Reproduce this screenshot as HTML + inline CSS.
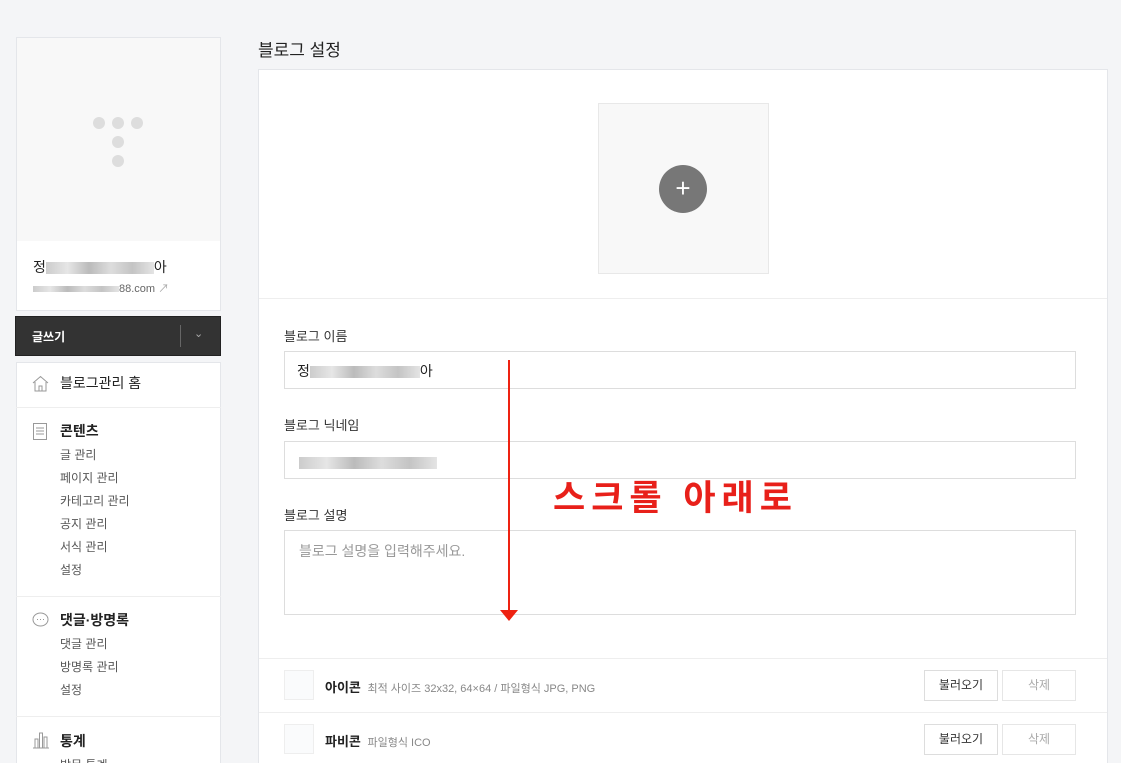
<!DOCTYPE html>
<html><head><meta charset="utf-8"><style>
*{box-sizing:border-box;margin:0;padding:0}
html,body{width:1121px;height:763px;overflow:hidden}
body{background:#f4f5f7;font-family:"Liberation Sans","Noto Sans CJK KR",sans-serif;color:#222;position:relative}
.a{position:absolute}
.box{position:absolute;background:#fff;border:1px solid #e4e6ea}
.blur{display:inline-block;height:12px;background:linear-gradient(90deg,#ccc,#e6e6e6 20%,#bbb 40%,#ddd 60%,#c4c4c4 80%,#e4e4e4);vertical-align:middle}
.lbl{position:absolute;left:284px;font-size:13px;color:#333}
.inp{position:absolute;left:284px;width:792px;border:1px solid #ddd;background:#fff}
.btn{position:absolute;width:74px;height:30px;border:1px solid #ddd;font-size:12px;text-align:center;line-height:28px;background:#fff}
.sub{font-size:12px;color:#555;line-height:23px;padding-left:44px}
.hd{font-size:14px;font-weight:bold;color:#222;padding-left:44px;position:relative;line-height:20px}
</style></head><body>
<div class="box" style="left:16px;top:37px;width:205px;height:205px;background:#f8f8f8"></div>
<div class="a" style="left:93px;top:117px;width:12px;height:12px;border-radius:6px;background:#ddd"></div>
<div class="a" style="left:112px;top:117px;width:12px;height:12px;border-radius:6px;background:#ddd"></div>
<div class="a" style="left:131px;top:117px;width:12px;height:12px;border-radius:6px;background:#ddd"></div>
<div class="a" style="left:112px;top:136px;width:12px;height:12px;border-radius:6px;background:#ddd"></div>
<div class="a" style="left:112px;top:155px;width:12px;height:12px;border-radius:6px;background:#ddd"></div>
<div class="box" style="left:16px;top:241px;width:205px;height:70px;border-top:none"></div>
<div class="a" style="left:33px;top:257px;font-size:14px">정<span class="blur" style="width:108px"></span>아</div>
<div class="a" style="left:33px;top:280px;font-size:11px;color:#666"><span class="blur" style="width:86px;height:6px"></span>88.com <span style="color:#aaa">↗</span></div>
<div class="a" style="left:15px;top:316px;width:206px;height:40px;background:#333;border:1px solid #222"></div>
<div class="a" style="left:32px;top:328px;font-size:12px;color:#fff;font-weight:bold">글쓰기</div>
<div class="a" style="left:180px;top:325px;width:1px;height:22px;background:#666"></div>
<div class="a" style="left:194px;top:327px;font-size:11px;color:#aaa">⌄</div>
<div class="box" style="left:16px;top:362px;width:205px;height:410px"></div>
<div class="a" style="left:16px;top:373px;width:205px;font-size:14px;padding-left:44px;line-height:20px">블로그관리 홈</div>
<svg class="a" style="left:32px;top:375px" width="17" height="17" viewBox="0 0 17 17" fill="none" stroke="#999"><path d="M1 8L8.5 1.5 16 8M3 7v9h11V7M7 16v-5h3v5"/></svg>
<div class="a" style="left:16px;top:407px;width:205px;height:1px;background:#eee"></div>
<div class="a" style="left:16px;top:421px;width:205px"><div class="hd">콘텐츠</div><div class="sub" style="margin-top:3px">글 관리<br>페이지 관리<br>카테고리 관리<br>공지 관리<br>서식 관리<br>설정</div></div>
<svg class="a" style="left:33px;top:423px" width="14" height="17" fill="none" stroke="#999"><rect x=".5" y=".5" width="13" height="16"/><path d="M3 5h8M3 8h8M3 11h8"/></svg>
<div class="a" style="left:16px;top:596px;width:205px;height:1px;background:#eee"></div>
<div class="a" style="left:16px;top:610px;width:205px"><div class="hd">댓글·방명록</div><div class="sub" style="margin-top:3px">댓글 관리<br>방명록 관리<br>설정</div></div>
<svg class="a" style="left:32px;top:612px" width="17" height="16" fill="none" stroke="#999"><ellipse cx="8.5" cy="7.5" rx="7.5" ry="6.5"/><path d="M5 7.5h1M8 7.5h1M11 7.5h1"/></svg>
<div class="a" style="left:16px;top:716px;width:205px;height:1px;background:#eee"></div>
<div class="a" style="left:16px;top:731px;width:205px"><div class="hd">통계</div><div class="sub" style="margin-top:3px">방문 통계</div></div>
<svg class="a" style="left:32px;top:731px" width="18" height="18" fill="none" stroke="#999"><path d="M1 17h16M3 17V8h3v9M7.5 17V2h3v15M12 17V6h3v11"/></svg>

<div class="a" style="left:258px;top:36px;font-size:17px;color:#222">블로그 설정</div>
<div class="box" style="left:258px;top:69px;width:850px;height:720px"></div>
<div class="a" style="left:598px;top:103px;width:171px;height:171px;background:#f8f8f8;border:1px solid #e8e8e8"></div>
<div class="a" style="left:659px;top:165px;width:48px;height:48px;border-radius:24px;background:#777;color:#fff;font-size:26px;text-align:center;line-height:46px">+</div>
<div class="a" style="left:259px;top:298px;width:848px;height:1px;background:#eee"></div>
<div class="lbl" style="top:326px">블로그 이름</div>
<div class="inp" style="top:351px;height:38px;padding:9px 12px;font-size:14px">정<span class="blur" style="width:110px"></span>아</div>
<div class="lbl" style="top:415px">블로그 닉네임</div>
<div class="inp" style="top:441px;height:38px;padding:12px 14px"><span class="blur" style="width:138px"></span></div>
<div class="lbl" style="top:505px">블로그 설명</div>
<div class="inp" style="top:530px;height:85px;padding:10px 14px;font-size:14px;color:#999">블로그 설명을 입력해주세요.</div>
<div class="a" style="left:508px;top:360px;width:2px;height:254px;background:#e21"></div>
<svg class="a" style="left:500px;top:610px" width="18" height="12"><path d="M0 0h18L9 11z" fill="#e21"/></svg>
<div class="a" style="left:553px;top:470px;font-size:35px;font-weight:bold;color:#e8201a;letter-spacing:6px">스크롤 아래로</div>
<div class="a" style="left:259px;top:658px;width:848px;height:1px;background:#eee"></div>
<div class="a" style="left:284px;top:670px;width:30px;height:30px;border:1px solid #eee;background:#fafbfc"></div>
<div class="a" style="left:325px;top:677px;font-size:13px;font-weight:bold">아이콘 <span style="font-weight:normal;font-size:11px;color:#888;margin-left:3px">최적 사이즈 32x32, 64×64 / 파일형식 JPG, PNG</span></div>
<div class="btn" style="left:924px;top:670px;height:31px;color:#333">불러오기</div>
<div class="btn" style="left:1002px;top:670px;height:31px;color:#aaa;border-color:#e6e6e6">삭제</div>
<div class="a" style="left:259px;top:712px;width:848px;height:1px;background:#eee"></div>
<div class="a" style="left:284px;top:724px;width:30px;height:30px;border:1px solid #eee;background:#fafbfc"></div>
<div class="a" style="left:325px;top:731px;font-size:13px;font-weight:bold">파비콘 <span style="font-weight:normal;font-size:11px;color:#888;margin-left:3px">파일형식 ICO</span></div>
<div class="btn" style="left:924px;top:724px;height:31px;color:#333">불러오기</div>
<div class="btn" style="left:1002px;top:724px;height:31px;color:#aaa;border-color:#e6e6e6">삭제</div>
</body></html>
